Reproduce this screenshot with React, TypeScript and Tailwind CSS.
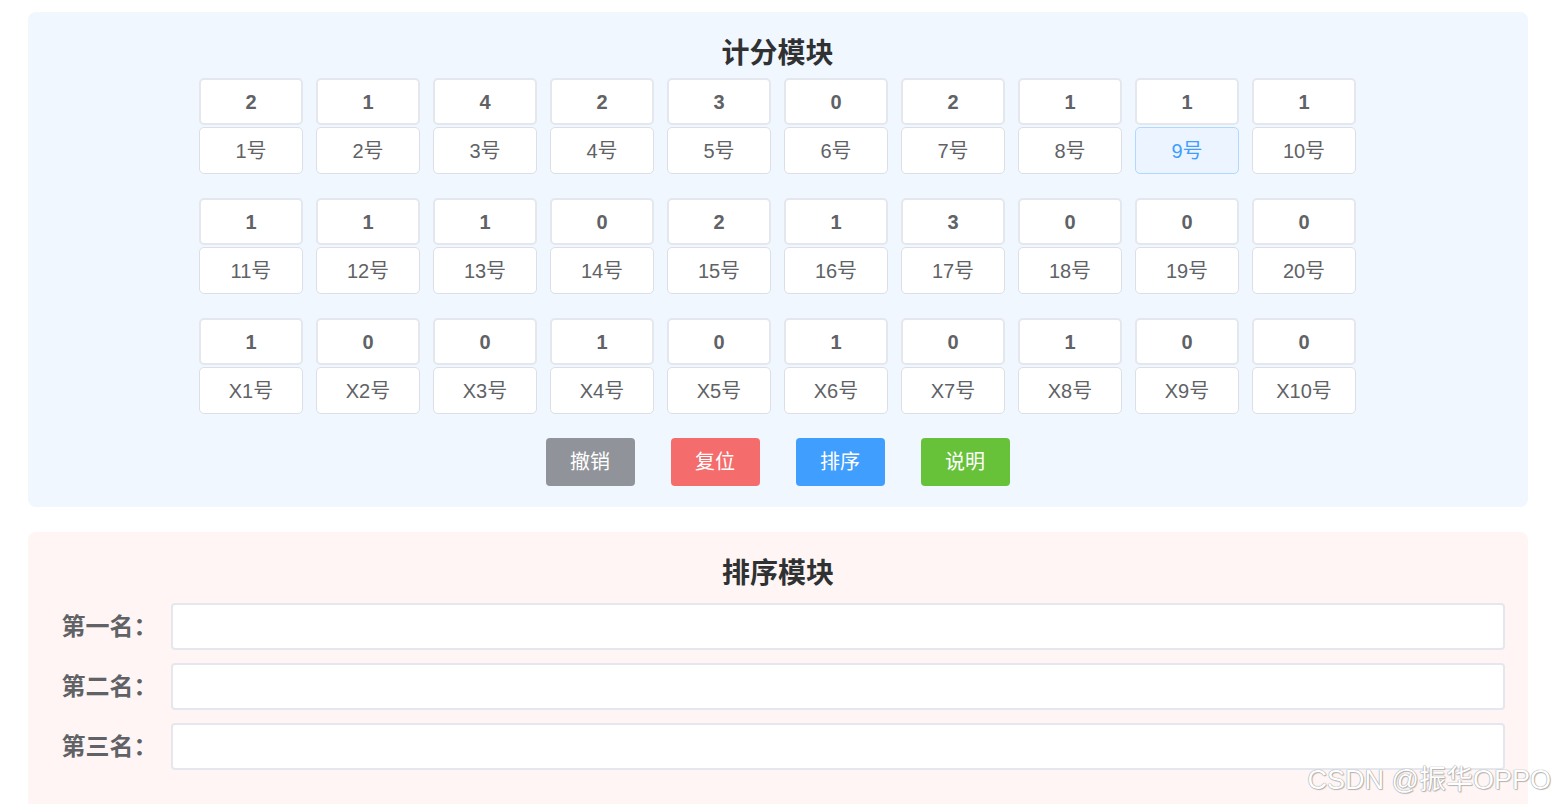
const font = "font-['Liberation_Sans','Noto_Sans_CJK_SC',sans-serif]";

const rows: { score: number; label: string }[][] = [
  [2, 1, 4, 2, 3, 0, 2, 1, 1, 1].map((s, i) => ({ score: s, label: `${i + 1}号` })),
  [1, 1, 1, 0, 2, 1, 3, 0, 0, 0].map((s, i) => ({ score: s, label: `${i + 11}号` })),
  [1, 0, 0, 1, 0, 1, 0, 1, 0, 0].map((s, i) => ({ score: s, label: `X${i + 1}号` })),
];

const actions = [
  { text: "撤销", cls: "bg-[#909399]" },
  { text: "复位", cls: "bg-[#f56c6c]" },
  { text: "排序", cls: "bg-[#409eff]" },
  { text: "说明", cls: "bg-[#67c23a]" },
];

function Cell({ score, label, active }: { score: number; label: string; active?: boolean }) {
  return (
    <div className="flex flex-col gap-[2px] w-[104px]">
      <div className="h-[47px] flex items-center justify-center rounded-[5px] bg-white border-2 border-[#e4e7ed] text-[20px] font-bold text-[#606266]">
        {score}
      </div>
      <div
        className={
          active
            ? "h-[47px] flex items-center justify-center rounded-[5px] bg-[#ecf5ff] border border-[#b3d8ff] text-[20px] text-[#409eff]"
            : "h-[47px] flex items-center justify-center rounded-[5px] bg-white border border-[#dcdfe6] text-[20px] text-[#606266]"
        }
      >
        {label}
      </div>
    </div>
  );
}

export default function App() {
  return (
    <div className={`relative w-full h-[804px] overflow-hidden bg-white pt-[12px] ${font}`}>
      {/* 计分模块 */}
      <section className="w-[1500px] mx-auto rounded-[8px] bg-[#f0f7ff] pt-[21px] pb-[21px]">
        <h2 className="text-center text-[28px] leading-[42px] font-bold text-[#303133] mb-[3px]">计分模块</h2>
        <div className="flex flex-col items-center gap-[24px]">
          {rows.map((row, r) => (
            <div key={r} className="flex gap-[13px]">
              {row.map((c, i) => (
                <Cell key={i} score={c.score} label={c.label} active={r === 0 && i === 8} />
              ))}
            </div>
          ))}
        </div>
        <div className="flex justify-center gap-[36px] mt-[24px]">
          {actions.map((a) => (
            <button key={a.text} className={`w-[89px] h-[48px] rounded-[4px] text-white text-[20px] ${a.cls}`}>
              {a.text}
            </button>
          ))}
        </div>
      </section>

      {/* 排序模块 */}
      <section className="w-[1500px] mx-auto mt-[25px] rounded-[8px] bg-[#fef5f4] pt-[21px] pb-[40px] pl-[24px] pr-[23px]">
        <h2 className="text-center text-[28px] leading-[42px] font-bold text-[#303133] mb-[8px]">排序模块</h2>
        <div className="flex flex-col gap-[13px]">
          {["第一名：", "第二名：", "第三名："].map((l) => (
            <div key={l} className="flex items-center">
              <label className="w-[119px] pl-[10px] text-[24px] font-bold text-[#606266]">{l}</label>
              <input className="flex-1 h-[47px] rounded-[4px] bg-white border-2 border-[#e4e7ed] outline-none px-3" />
            </div>
          ))}
        </div>
      </section>

      <div className="absolute right-[4px] bottom-[10px] text-[27px] leading-none text-white [text-shadow:0_0_1px_#999,0_0_1px_#999,1px_1px_1px_#bbb]">
        CSDN @振华OPPO
      </div>
    </div>
  );
}
